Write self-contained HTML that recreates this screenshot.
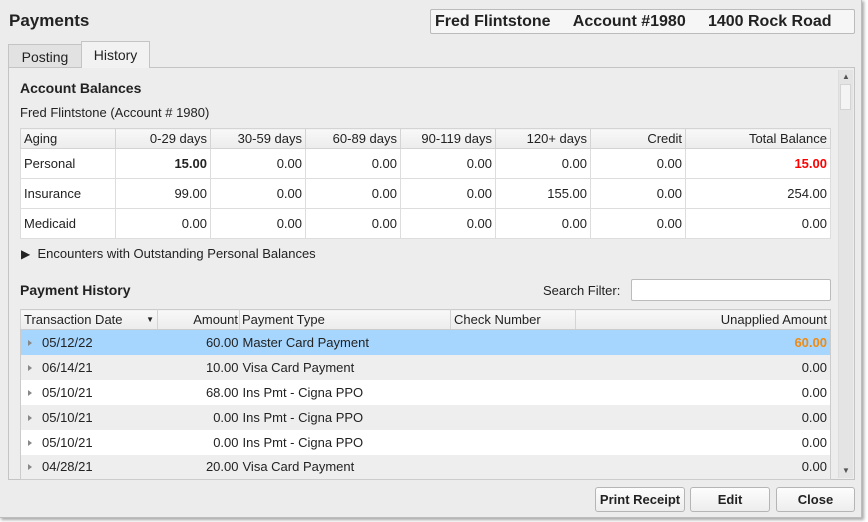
<!DOCTYPE html>
<html><head><style>
*{box-sizing:border-box;margin:0;padding:0}
body{width:868px;height:522px;background:#fff;font-family:"Liberation Sans",sans-serif;color:#222;position:relative;overflow:hidden}
.win{position:absolute;left:-1px;top:-1px;width:863px;height:519px;background:#ececec;border:1px solid #bdbdbd;box-shadow:2px 2px 3px rgba(0,0,0,.35)}
.a{position:absolute;white-space:nowrap}
.b{font-weight:bold}
table{border-collapse:collapse;position:absolute;font-size:13px}
td{border:1px solid #ddd;padding:0 3px;text-align:right}
.bt td{height:30px;background:#fff}
.bt tr.h td{height:20px;background:linear-gradient(#f8f8f8,#ececec);border-color:#d4d4d4}
.ht td{height:25px;border:none}
.ht tr.h td{height:20px;background:linear-gradient(#f8f8f8,#ececec);border-left:1px solid #d4d4d4;border-bottom:1px solid #ccc}
.g{background:#eeeeee}.w{background:#fff}.s{background:#a6d6fe}
.btn{position:absolute;top:487px;height:25px;border:1px solid #b5b5b5;border-radius:3px;background:linear-gradient(#fdfdfd,#ededed);font-weight:bold;font-size:13px;text-align:center;line-height:23px}
.tri{display:inline-block;width:0;height:0;border-left:4px solid #888;border-top:3px solid transparent;border-bottom:3px solid transparent;margin:0 10px 1px 4px}
</style></head><body>
<div class="win">
<div class="a b" style="left:9px;top:11px;font-size:17px">Payments</div>
<div class="a b" style="left:430px;top:9px;width:425px;height:25px;border:1px solid #bbb;border-radius:2px;background:#f6f6f6;font-size:16px;line-height:23px;padding-left:4px">Fred Flintstone&nbsp;&nbsp;&nbsp;&nbsp;&nbsp;Account #1980&nbsp;&nbsp;&nbsp;&nbsp;&nbsp;1400 Rock Road</div>
<div class="a" style="left:8px;top:44px;width:74px;height:24px;border:1px solid #c4c4c4;border-bottom:none;background:#e2e2e2;font-size:14px;text-align:center;line-height:24px">Posting</div>
<div class="a" style="left:81px;top:41px;width:69px;height:27px;border:1px solid #c4c4c4;border-bottom:none;background:#f2f2f2;font-size:14px;text-align:center;line-height:26px;z-index:2">History</div>
<div class="a" style="left:8px;top:67px;width:847px;height:413px;border:1px solid #c4c4c4;background:#ededed"></div>
<div class="a" style="left:838px;top:70px;width:15px;height:408px;background:#e4e4e4;border-left:1px solid #ddd"></div>
<div class="a" style="left:840px;top:84px;width:11px;height:26px;background:#f4f4f4;border:1px solid #d4d4d4"></div>
<div class="a" style="left:842px;top:72px;font-size:8px;color:#555">▲</div>
<div class="a" style="left:842px;top:466px;font-size:8px;color:#555">▼</div>
<div class="a b" style="left:20px;top:80px;font-size:14px">Account Balances</div>
<div class="a" style="left:20px;top:105px;font-size:13px">Fred Flintstone (Account # 1980)</div>
<table class="bt" style="left:20px;top:128px;width:811px">
<colgroup><col style="width:95px"><col style="width:95px"><col style="width:95px"><col style="width:95px"><col style="width:95px"><col style="width:95px"><col style="width:95px"><col></colgroup>
<tr class="h"><td style="text-align:left">Aging</td><td>0-29 days</td><td>30-59 days</td><td>60-89 days</td><td>90-119 days</td><td>120+ days</td><td>Credit</td><td>Total Balance</td></tr>
<tr><td style="text-align:left">Personal</td><td class="b">15.00</td><td>0.00</td><td>0.00</td><td>0.00</td><td>0.00</td><td>0.00</td><td class="b" style="color:#f00">15.00</td></tr>
<tr><td style="text-align:left">Insurance</td><td>99.00</td><td>0.00</td><td>0.00</td><td>0.00</td><td>155.00</td><td>0.00</td><td>254.00</td></tr>
<tr><td style="text-align:left">Medicaid</td><td>0.00</td><td>0.00</td><td>0.00</td><td>0.00</td><td>0.00</td><td>0.00</td><td>0.00</td></tr>
</table>
<div class="a" style="left:21px;top:246px;font-size:13px"><span style="font-size:12px">▶</span>&nbsp;&nbsp;Encounters with Outstanding Personal Balances</div>
<div class="a b" style="left:20px;top:282px;font-size:14px">Payment History</div>
<div class="a" style="left:543px;top:283px;font-size:13px">Search Filter:</div>
<div class="a" style="left:631px;top:279px;width:200px;height:22px;border:1px solid #bbb;border-radius:2px;background:#fff"></div>
<table class="ht" style="left:20px;top:309px;width:811px;border:1px solid #ccc">
<colgroup><col style="width:137px"><col style="width:82px"><col style="width:211px"><col style="width:125px"><col></colgroup>
<tr class="h"><td style="text-align:left">Transaction Date <span style="float:right;font-size:8px;margin-top:3px">▼</span></td><td style="padding-right:1px">Amount</td><td style="text-align:left;padding-left:2px">Payment Type</td><td style="text-align:left">Check Number</td><td>Unapplied Amount</td></tr>
<tr class="s"><td style="text-align:left"><span class="tri"></span>05/12/22</td><td style="padding-right:1px">60.00</td><td style="text-align:left;padding-left:3px">Master Card Payment</td><td></td><td class="b" style="color:#f08a10">60.00</td></tr>
<tr class="g"><td style="text-align:left"><span class="tri"></span>06/14/21</td><td style="padding-right:1px">10.00</td><td style="text-align:left;padding-left:3px">Visa Card Payment</td><td></td><td>0.00</td></tr>
<tr class="w"><td style="text-align:left"><span class="tri"></span>05/10/21</td><td style="padding-right:1px">68.00</td><td style="text-align:left;padding-left:3px">Ins Pmt - Cigna PPO</td><td></td><td>0.00</td></tr>
<tr class="g"><td style="text-align:left"><span class="tri"></span>05/10/21</td><td style="padding-right:1px">0.00</td><td style="text-align:left;padding-left:3px">Ins Pmt - Cigna PPO</td><td></td><td>0.00</td></tr>
<tr class="w"><td style="text-align:left"><span class="tri"></span>05/10/21</td><td style="padding-right:1px">0.00</td><td style="text-align:left;padding-left:3px">Ins Pmt - Cigna PPO</td><td></td><td>0.00</td></tr>
<tr class="g"><td style="text-align:left"><span class="tri"></span>04/28/21</td><td style="padding-right:1px">20.00</td><td style="text-align:left;padding-left:3px">Visa Card Payment</td><td></td><td>0.00</td></tr>
</table>
<div class="btn" style="left:595px;width:90px">Print Receipt</div>
<div class="btn" style="left:690px;width:80px">Edit</div>
<div class="btn" style="left:776px;width:79px">Close</div>
</div>
</body></html>
